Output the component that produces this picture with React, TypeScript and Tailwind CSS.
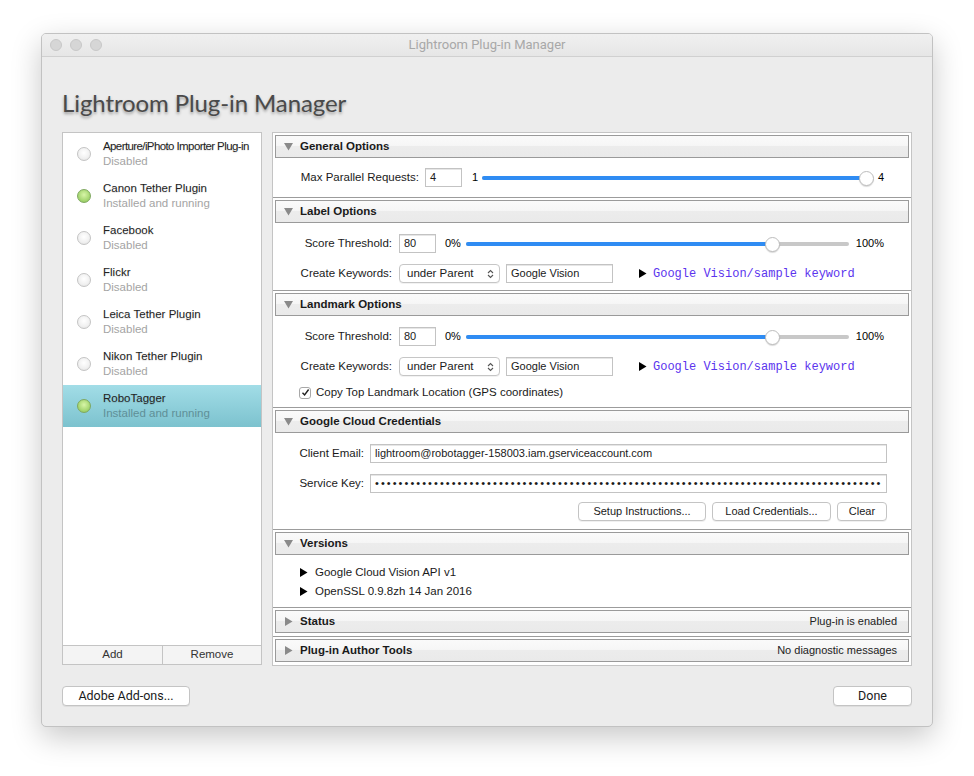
import React from 'react';

const plugins = [
  { name: 'Aperture/iPhoto Importer Plug-in', status: 'Disabled', on: false, tight: true },
  { name: 'Canon Tether Plugin', status: 'Installed and running', on: true },
  { name: 'Facebook', status: 'Disabled', on: false },
  { name: 'Flickr', status: 'Disabled', on: false },
  { name: 'Leica Tether Plugin', status: 'Disabled', on: false },
  { name: 'Nikon Tether Plugin', status: 'Disabled', on: false },
  { name: 'RoboTagger', status: 'Installed and running', on: true, selected: true },
];

const Dot: React.FC<{ on: boolean }> = ({ on }) => (
  <div
    className={
      on
        ? 'w-[14px] h-[14px] rounded-full border border-[#7fa860] bg-[radial-gradient(circle_at_50%_40%,#d8f5a8,#9fd26a_70%,#84b858)]'
        : 'w-[14px] h-[14px] rounded-full border border-[#c4c4c4] bg-[radial-gradient(circle_at_50%_40%,#ffffff,#f0f0f0_60%,#dcdcdc)]'
    }
  />
);

const Caret: React.FC<{ open?: boolean; color?: string }> = ({ open, color = '#8a8a8a' }) => (
  <svg width="9" height="9" viewBox="0 0 9 9">
    {open ? <polygon points="0,1 9,1 4.5,8.5" fill={color} /> : <polygon points="1,0 8.5,4.5 1,9" fill={color} />}
  </svg>
);

const Header: React.FC<{ title: string; open?: boolean; right?: string }> = ({ title, open, right }) => (
  <div className="mx-[2px] mt-[2px] h-[23px] border border-[#9a9a9a] bg-[linear-gradient(#fafafa_0%,#f6f6f6_45%,#ececec_50%,#eaeaea_100%)] flex items-center pl-[8px] pr-[11px]">
    <Caret open={open} />
    <span className="ml-[7px] text-[11.5px] font-bold text-[#1a1a1a]">{title}</span>
    {right && <span className="ml-auto text-[11px] text-[#222]">{right}</span>}
  </div>
);

const Input: React.FC<{ value: string; w: string }> = ({ value, w }) => (
  <div className={`${w} h-[19px] border border-[#c3c3c3] bg-white shadow-[inset_0_1px_0_#e6e6e6] flex items-center px-[4px] text-[11px] text-[#1a1a1a] overflow-hidden whitespace-nowrap`}>
    {value}
  </div>
);

const Slider: React.FC<{ pct: number }> = ({ pct }) => (
  <div className="relative flex-1 h-[16px]">
    <div className="absolute left-0 right-0 top-[6px] h-[4px] rounded-full bg-[#c8c8c8]" />
    <div className="absolute left-0 top-[6px] h-[4px] rounded-full bg-[#2f8cf3]" style={{ width: `${pct}%` }} />
    <div
      className="absolute top-[1px] w-[15px] h-[15px] rounded-full bg-white border border-[#bdbdbd] shadow-[0_1px_1px_rgba(0,0,0,0.15)]"
      style={{ left: `calc(${pct}% - 7px)` }}
    />
  </div>
);

const Select: React.FC<{ value: string }> = ({ value }) => (
  <div className="w-[101px] h-[19px] rounded-[4px] border border-[#c6c6c6] bg-white shadow-[0_1px_0_rgba(0,0,0,0.05)] flex items-center pl-[7px] pr-[5px] text-[11.5px] text-[#1a1a1a]">
    {value}
    <svg className="ml-auto" width="7" height="10" viewBox="0 0 7 10">
      <path d="M1 4 L3.5 1.5 L6 4 M1 6 L3.5 8.5 L6 6" stroke="#555" strokeWidth="1.1" fill="none" />
    </svg>
  </div>
);

const Button: React.FC<{ children: React.ReactNode; className?: string }> = ({ children, className = '' }) => (
  <div className={`h-[19px] rounded-[4px] border border-[#c4c4c4] bg-white shadow-[0_1px_0_rgba(0,0,0,0.06)] flex items-center justify-center text-[11px] text-[#1a1a1a] ${className}`}>
    {children}
  </div>
);

const Label: React.FC<{ w: string; children: React.ReactNode }> = ({ w, children }) => (
  <div className={`${w} shrink-0 text-right text-[11.5px] text-[#1a1a1a]`}>{children}</div>
);

const KeywordRows: React.FC = () => (
  <>
    <div className="flex items-center h-[19px]">
      <Label w="w-[119px]">Score Threshold:</Label>
      <div className="ml-[7px]"><Input value="80" w="w-[37px]" /></div>
      <span className="ml-[9px] w-[15px] text-[11px]">0%</span>
      <div className="ml-[6px] flex-1 flex"><Slider pct={80} /></div>
      <span className="ml-[7px] text-[11px]">100%</span>
    </div>
    <div className="flex items-center h-[19px] mt-[11px]">
      <Label w="w-[119px]">Create Keywords:</Label>
      <div className="ml-[7px]"><Select value="under Parent" /></div>
      <div className="ml-[6px]"><Input value="Google Vision" w="w-[107px]" /></div>
      <div className="ml-[25px]"><Caret color="#000" /></div>
      <span className="ml-[6px] font-['Liberation_Mono',monospace] text-[12px] text-[#5b34ee]">Google Vision/sample keyword</span>
    </div>
  </>
);

export default function App() {
  return (
    <div className="min-h-screen bg-white pt-[33px] pl-[41px] font-['Liberation_Sans',Arial,sans-serif]">
      <div className="w-[892px] h-[694px] rounded-[5px] border border-[#c2c2c2] bg-[#ececec] shadow-[0_10px_30px_rgba(0,0,0,0.22)] flex flex-col overflow-hidden">
        {/* title bar */}
        <div className="h-[23px] shrink-0 border-b border-[#d0d0d0] bg-[linear-gradient(#f0f0f0,#e6e6e6)] flex items-center relative">
          <div className="flex gap-[8px] pl-[8px]">
            <div className="w-[12px] h-[12px] rounded-full bg-[#d6d6d6] border border-[#c8c8c8]" />
            <div className="w-[12px] h-[12px] rounded-full bg-[#d6d6d6] border border-[#c8c8c8]" />
            <div className="w-[12px] h-[12px] rounded-full bg-[#d6d6d6] border border-[#c8c8c8]" />
          </div>
          <div className="absolute inset-0 flex items-center justify-center text-[13px] text-[#a8a8a8] font-['Roboto',sans-serif]">
            Lightroom Plug-in Manager
          </div>
        </div>

        <div className="flex-1 flex flex-col px-[20px]">
          <div className="h-[75px] shrink-0 flex items-center pt-[17px]">
            <h1 className="text-[24px] text-[#4a4a4a] font-['Lato',sans-serif] tracking-[-0.1px] [text-shadow:0_2px_3px_rgba(0,0,0,0.35)]">
              Lightroom Plug-in Manager
            </h1>
          </div>

          <div className="h-[534px] flex gap-[10px]">
            {/* plug-in list */}
            <div className="w-[200px] h-[533px] border border-[#c4c4c4] bg-white flex flex-col">
              <div className="flex-1">
                {plugins.map((p) => (
                  <div
                    key={p.name}
                    className={`h-[42px] flex items-center ${p.selected ? 'bg-[linear-gradient(#a2dde7,#7cc2ce)]' : ''}`}
                  >
                    <div className="w-[40px] flex justify-center pl-[1px]"><Dot on={p.on} /></div>
                    <div className="flex flex-col leading-[15px] mt-[-1px]">
                      <span className={`text-[11.5px] text-[#222] [text-shadow:0_1px_1px_rgba(0,0,0,0.12)] ${p.tight ? 'tracking-[-0.6px]' : ''}`}>{p.name}</span>
                      <span className={`text-[11.5px] ${p.selected ? 'text-[#5f8f97]' : 'text-[#a4a4a4]'}`}>{p.status}</span>
                    </div>
                  </div>
                ))}
              </div>
              <div className="h-[19px] border-t border-[#c4c4c4] bg-[#f4f4f4] flex text-[11.5px] text-[#333]">
                <div className="w-[100px] border-r border-[#c4c4c4] flex items-center justify-center">Add</div>
                <div className="flex-1 flex items-center justify-center">Remove</div>
              </div>
            </div>

            {/* option sections */}
            <div className="w-[640px] h-[534px] border border-[#c4c4c4] bg-white flex flex-col">
              <div className="border-b border-[#9c9c9c]">
                <Header title="General Options" open />
                <div className="h-[39px] flex items-center pr-[27px]">
                  <Label w="w-[146px]">Max Parallel Requests:</Label>
                  <div className="ml-[6px]"><Input value="4" w="w-[37px]" /></div>
                  <span className="ml-[10px] text-[11px]">1</span>
                  <div className="ml-[4px] flex-1 flex"><Slider pct={100} /></div>
                  <span className="ml-[12px] text-[11px]">4</span>
                </div>
              </div>

              <div className="border-b border-[#9c9c9c]">
                <Header title="Label Options" open />
                <div className="h-[67px] pt-[11px] pr-[27px]">
                  <KeywordRows />
                </div>
              </div>

              <div className="border-b border-[#9c9c9c]">
                <Header title="Landmark Options" open />
                <div className="h-[91px] pt-[11px] pr-[27px]">
                  <KeywordRows />
                  <div className="mt-[10px] flex items-center pl-[26px] h-[13px]">
                    <div className="w-[12px] h-[12px] rounded-[3px] border border-[#a8a8a8] bg-white flex items-center justify-center">
                      <svg width="9" height="9" viewBox="0 0 9 9">
                        <path d="M1.5 4.8 L3.6 7 L7.6 1.5" stroke="#222" strokeWidth="1.4" fill="none" />
                      </svg>
                    </div>
                    <span className="ml-[5px] text-[11.5px] text-[#1a1a1a]">Copy Top Landmark Location (GPS coordinates)</span>
                  </div>
                </div>
              </div>

              <div className="border-b border-[#9c9c9c]">
                <Header title="Google Cloud Credentials" open />
                <div className="h-[96px] pt-[11px] pr-[24px]">
                  <div className="flex items-center h-[19px]">
                    <Label w="w-[91px]">Client Email:</Label>
                    <div className="ml-[6px] flex-1 min-w-0 flex">
                      <Input value="lightroom@robotagger-158003.iam.gserviceaccount.com" w="flex-1 min-w-0" />
                    </div>
                  </div>
                  <div className="flex items-center h-[19px] mt-[11px]">
                    <Label w="w-[91px]">Service Key:</Label>
                    <div className="ml-[6px] flex-1 min-w-0 flex">
                      <Input value={'•'.repeat(86)} w="flex-1 min-w-0 tracking-[2.05px]" />
                    </div>
                  </div>
                  <div className="flex justify-end gap-[6px] mt-[9px]">
                    <Button className="w-[128px]">Setup Instructions...</Button>
                    <Button className="w-[119px]">Load Credentials...</Button>
                    <Button className="w-[50px]">Clear</Button>
                  </div>
                </div>
              </div>

              <div className="border-b border-[#9c9c9c]">
                <Header title="Versions" open />
                <div className="h-[52px] pt-[8px] pl-[26px] text-[11.5px] text-[#1a1a1a]">
                  <div className="h-[19px] flex items-center gap-[7px]"><Caret color="#000" /><span>Google Cloud Vision API v1</span></div>
                  <div className="h-[19px] flex items-center gap-[7px]"><Caret color="#000" /><span>OpenSSL 0.9.8zh 14 Jan 2016</span></div>
                </div>
              </div>

              <div className="border-b border-[#9c9c9c] pb-[3px]">
                <Header title="Status" right="Plug-in is enabled" />
              </div>

              <div className="pb-[3px]">
                <Header title="Plug-in Author Tools" right="No diagnostic messages" />
              </div>
            </div>
          </div>

          <div className="flex justify-between mt-[20px]">
            <div className="w-[128px] h-[20px] rounded-[4px] border border-[#c4c4c4] bg-white shadow-[0_1px_0_rgba(0,0,0,0.06)] flex items-center justify-center text-[12.5px] text-[#1a1a1a] font-['Roboto',sans-serif]">
              Adobe Add-ons...
            </div>
            <div className="w-[79px] h-[20px] rounded-[4px] border border-[#c4c4c4] bg-white shadow-[0_1px_0_rgba(0,0,0,0.06)] flex items-center justify-center text-[12.5px] text-[#1a1a1a] font-['Roboto',sans-serif]">
              Done
            </div>
          </div>
        </div>
      </div>
    </div>
  );
}
